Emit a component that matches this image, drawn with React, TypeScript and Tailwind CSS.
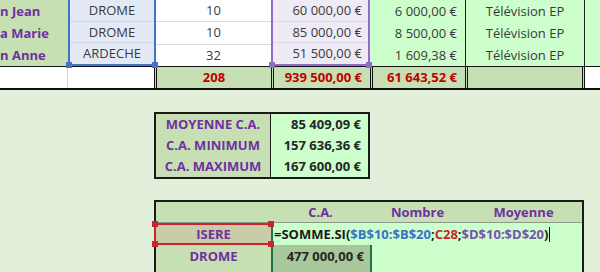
import React from "react";

type Row = {
  name: string;
  dept: string;
  qty: string;
  ca: string;
  com: string;
  prod: string;
};

const rows: Row[] = [
  { name: "n Jean", dept: "DROME", qty: "10", ca: "60 000,00 €", com: "6 000,00 €", prod: "Télévision EP" },
  { name: "a Marie", dept: "DROME", qty: "10", ca: "85 000,00 €", com: "8 500,00 €", prod: "Télévision EP" },
  { name: "n Anne", dept: "ARDECHE", qty: "32", ca: "51 500,00 €", com: "1 609,38 €", prod: "Télévision EP" },
];

const stats = [
  { label: "MOYENNE C.A.", value: "85 409,09 €" },
  { label: "C.A. MINIMUM", value: "157 636,36 €" },
  { label: "C.A. MAXIMUM", value: "167 600,00 €" },
];

function Handle({ pos, color }: { pos: string; color: string }) {
  return <span className={`absolute h-[6px] w-[6px] ${pos} ${color}`} />;
}

export default function App() {
  return (
    <div className="h-[272px] w-[600px] overflow-hidden bg-[#e2efda] font-['Open_Sans','Noto_Sans',sans-serif] text-[13px] leading-none text-[#3a3a3a]">
      {/* data rows */}
      <div className="flex h-[66px]">
        <div className="flex w-[68px] flex-col bg-[#c6e0b4]">
          {rows.map((r, i) => (
            <div key={i} className="flex flex-1 items-center justify-start whitespace-nowrap font-bold text-[#7030a0]">
              {r.name}
            </div>
          ))}
        </div>

        <div className="relative flex w-[88px] flex-col border-x-2 border-b-2 border-[#4472c4] bg-[#e3eaf6]">
          {rows.map((r, i) => (
            <div key={i} className={`flex flex-1 items-center justify-center ${i < 2 ? "border-b border-[#cfd6e2]" : ""}`}>
              {r.dept}
            </div>
          ))}
          <Handle pos="-bottom-[4px] -left-[4px]" color="bg-[#4472c4]" />
          <Handle pos="-bottom-[4px] -right-[4px]" color="bg-[#4472c4]" />
        </div>

        <div className="flex w-[115px] flex-col bg-white">
          {rows.map((r, i) => (
            <div key={i} className={`flex flex-1 items-center justify-center ${i < 2 ? "border-b border-[#dadada]" : ""}`}>
              {r.qty}
            </div>
          ))}
        </div>

        <div className="relative flex w-[99px] flex-col border-x-2 border-b-2 border-[#8e6cc8] bg-[#eeebf6]">
          {rows.map((r, i) => (
            <div key={i} className={`flex flex-1 items-center justify-end pr-[6px] ${i < 2 ? "border-b border-[#dcd8e4]" : ""}`}>
              {r.ca}
            </div>
          ))}
          <Handle pos="-bottom-[4px] -left-[4px]" color="bg-[#8e6cc8]" />
          <Handle pos="-bottom-[4px] -right-[4px]" color="bg-[#8e6cc8]" />
        </div>

        <div className="flex w-[95px] flex-col bg-[#ccffcc]">
          {rows.map((r, i) => (
            <div key={i} className="flex flex-1 items-center justify-end pr-[8px]">
              {r.com}
            </div>
          ))}
        </div>

        <div className="flex w-[120px] flex-col border-x border-[#1f1f1f] bg-[#ccffcc]">
          {rows.map((r, i) => (
            <div key={i} className="flex flex-1 items-center justify-center">
              {r.prod}
            </div>
          ))}
        </div>

        <div className="flex-1 bg-[#ccffcc]" />
      </div>

      {/* totals row */}
      <div className="flex h-[24px] border-y border-b-2 border-[#111] bg-white font-bold text-[#c00000]">
        <div className="w-[68px] border-r border-[#d4d4d4]" />
        <div className="w-[86px]" />
        <div className="flex w-[117px] items-center justify-center border-l-[3px] border-double border-[#111] bg-[#c6e0b4]">208</div>
        <div className="flex w-[99px] items-center justify-end border-l-[3px] border-double border-[#111] bg-[#c6e0b4] pr-[8px]">939 500,00 €</div>
        <div className="flex w-[95px] items-center justify-end border-l-[3px] border-double border-[#111] bg-[#c6e0b4] pr-[8px]">61 643,52 €</div>
        <div className="w-[120px] border-x-[3px] border-double border-[#111] bg-[#c6e0b4]" />
        <div className="flex-1" />
      </div>

      {/* statistics block */}
      <div className="ml-[154px] mt-[22px] flex w-[216px] border-2 border-[#1a1a1a] font-bold">
        <div className="flex w-[115px] flex-col border-r border-[#1a1a1a] bg-[#c6e0b4] text-[#7030a0]">
          {stats.map((s) => (
            <div key={s.label} className="flex h-[21px] items-center justify-center">
              {s.label}
            </div>
          ))}
        </div>
        <div className="flex flex-1 flex-col bg-[#ccffcc] text-[#262626]">
          {stats.map((s) => (
            <div key={s.label} className="flex h-[21px] items-center justify-end pr-[7px]">
              {s.value}
            </div>
          ))}
        </div>
      </div>

      {/* summary by department */}
      <div className="ml-[154px] mt-[21px] w-[430px] border-r-2 border-t-2 border-[#1a1a1a] font-bold">
        <div className="flex h-[21px] border-b border-[#8c9a88] bg-[#c6e0b4] text-[#7030a0]">
          <div className="w-[117px] border-l-2 border-[#1a1a1a]" />
          <div className="flex w-[99px] items-center justify-center">C.A.</div>
          <div className="flex w-[95px] items-center justify-center">Nombre</div>
          <div className="flex flex-1 items-center justify-center">Moyenne</div>
        </div>

        <div className="flex h-[22px]">
          <div className="relative flex w-[117px] items-center justify-center border-y-2 border-l-2 border-[#c8252c] bg-[#c9cca7] text-[#7030a0]">
            ISERE
            <Handle pos="-left-[4px] -top-[4px]" color="bg-[#c8252c]" />
            <Handle pos="-right-[3px] -top-[4px]" color="bg-[#c8252c]" />
            <Handle pos="-bottom-[4px] -left-[4px]" color="bg-[#c8252c]" />
            <Handle pos="-bottom-[4px] -right-[3px]" color="bg-[#c8252c]" />
          </div>
          <div className="flex flex-1 items-center whitespace-nowrap border-l-2 border-[#217346] bg-[#ccffcc] pl-[1px] text-[#1a1a1a]">
            <span>=SOMME.SI(</span>
            <span className="text-[#3a72c9]">$B$10:$B$20</span>
            <span>;</span>
            <span className="text-[#c8252c]">C28</span>
            <span>;</span>
            <span className="text-[#7b4fb0]">$D$10:$D$20</span>
            <span>)</span>
            <span className="ml-[1px] h-[15px] w-px bg-black" />
          </div>
        </div>

        <div className="flex h-[22px]">
          <div className="flex w-[117px] items-center justify-center border-l-2 border-[#1a1a1a] bg-[#c6e0b4] text-[#7030a0]">DROME</div>
          <div className="flex w-[101px] items-center justify-end border-x-2 border-[#217346] bg-[#a8c89b] pr-[6px] text-[#262626]">477 000,00 €</div>
          <div className="w-[93px] bg-[#ccffcc]" />
          <div className="flex-1 bg-[#ccffcc]" />
        </div>

        <div className="flex h-[10px]">
          <div className="w-[117px] border-l-2 border-[#1a1a1a] bg-[#c6e0b4]" />
          <div className="w-[101px] border-x-2 border-[#217346] bg-[#a8c89b]" />
          <div className="flex-1 bg-[#ccffcc]" />
        </div>
      </div>
    </div>
  );
}
